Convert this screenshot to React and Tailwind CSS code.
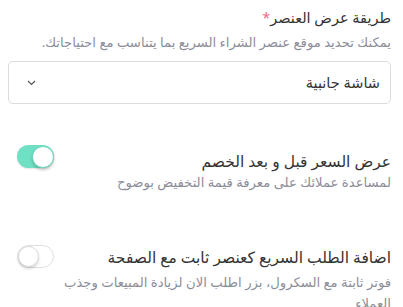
export default function App() {
  return (
    <div dir="rtl" className="w-[403px] h-[307px] overflow-hidden bg-white text-right" style={{ fontFamily: '"Noto Sans", "DejaVu Sans", sans-serif' }}>
      <div className="pr-[12px] pl-[12px] pt-[6px]">
        <div className="text-[14.5px] leading-[22px] text-[#333]">
          طريقة عرض العنصر<span className="text-[#f06a8a]">*</span>
        </div>
        <div className="text-[13.2px] leading-[20px] text-[#8d8d9a] mt-[4px] whitespace-nowrap">
          يمكنك تحديد موقع عنصر الشراء السريع بما يتناسب مع احتياجاتك.
        </div>
        <div className="mt-[9px] h-[43px] border border-[#dcdcdc] rounded-[5px] flex items-center justify-between pr-[10px] pl-[18px]" style={{ marginLeft: -4 }}>
          <span className="text-[14.5px] text-[#333]">شاشة جانبية</span>
          <svg width="9" height="6" viewBox="0 0 9 6" fill="none">
            <path d="M1 1l3.5 3.5L8 1" stroke="#555" strokeWidth="1.2" />
          </svg>
        </div>

        <div className="mt-[46px] flex items-start justify-between">
          <div>
            <div className="text-[15.5px] leading-[22px] text-[#333]">عرض السعر قبل و بعد الخصم</div>
            <div className="text-[13.2px] leading-[20px] text-[#8d8d9a]">لمساعدة عملائك على معرفة قيمة التخفيض بوضوح</div>
          </div>
          <div className="ml-[5px] mt-[-5px] w-[37px] h-[23px] rounded-full bg-[#70e0c4] flex items-center justify-start shadow-[0_1px_2px_rgba(0,0,0,0.1)] shrink-0">
            <div className="w-[22px] h-[22px] rounded-full bg-white border border-[#6fd9bd] shadow-[0_2px_3px_rgba(0,0,0,0.2)]"></div>
          </div>
        </div>

        <div className="mt-[54px] flex items-start justify-between">
          <div>
            <div className="text-[15.5px] leading-[22px] text-[#333]">اضافة الطلب السريع كعنصر ثابت مع الصفحة</div>
            <div className="text-[13.2px] text-[#8d8d9a] w-[332px] mt-[3px]">
              <div className="leading-[22px] h-[22px]">فوتر ثابتة مع السكرول، بزر اطلب الان لزيادة المبيعات وجذب</div>
              <div className="leading-[21px] h-[21px]">العملاء</div>
            </div>
          </div>
          <div className="ml-[5px] mt-[-1px] w-[37px] h-[23px] rounded-full bg-white border border-[#dedede] flex items-center justify-end shrink-0">
            <div className="w-[21px] h-[21px] rounded-full bg-white border border-[#d8d8d8] shadow-[0_2px_3px_rgba(0,0,0,0.15)]"></div>
          </div>
        </div>
      </div>
    </div>
  );
}
